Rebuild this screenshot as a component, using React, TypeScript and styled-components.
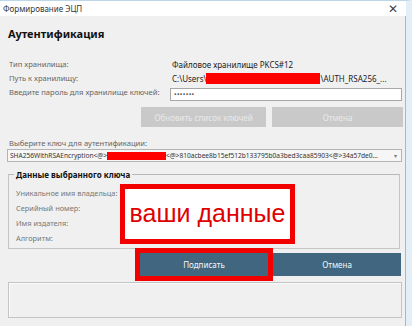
import styled, { createGlobalStyle } from "styled-components";

const GlobalStyle = createGlobalStyle`
  html, body {
    margin: 0;
    padding: 0;
    background: #eaf1f7;
  }
  * {
    box-sizing: border-box;
  }
`;

const Window = styled.div`
  width: 412px;
  height: 326px;
  display: flex;
  flex-direction: column;
  background: #f0f0f0;
  font-family: "Noto Sans", "Open Sans", sans-serif;
  font-size: 8px;
  color: #222;
  border-top: 1px solid #bcd6ea;
  border-right: 6px solid #e4eef6;
  overflow: hidden;
`;

const TitleBar = styled.div`
  height: 15px;
  flex-shrink: 0;
  display: flex;
  align-items: center;
  justify-content: space-between;
  padding: 0 8px 0 3px;
  background: #ffffff;
  color: #333;
  font-size: 8px;
`;

const Close = styled.span`
  font-size: 12px;
  color: #444;
  line-height: 1;
`;

const Body = styled.div`
  flex: 1;
  display: flex;
  flex-direction: column;
  padding: 0 2px 0 7px;
  border-right: 1px solid #a9b8c6;
`;

const Heading = styled.h1`
  margin: 0;
  height: 34px;
  display: flex;
  align-items: center;
  padding-left: 1px;
  font-size: 11px;
  font-weight: 700;
  color: #111;
`;

const Form = styled.div`
  display: grid;
  grid-template-columns: 165px 1fr;
  grid-auto-rows: 14px;
  align-items: center;
  margin-top: 7px;
  padding-right: 1px;
`;

const Label = styled.span`
  padding-left: 2px;
  color: #666;
  font-size: 7.6px;
  white-space: nowrap;
`;

const Value = styled.span`
  display: flex;
  align-items: center;
  white-space: nowrap;
  color: #222;
`;

const Redact = styled.span<{ $w: number; $h?: number }>`
  display: inline-block;
  width: ${(p) => p.$w}px;
  height: ${(p) => p.$h ?? 11}px;
  background: #ff0000;
`;

const PasswordInput = styled.div`
  height: 13px;
  margin: 4px 0 0 -2px;
  border: 1px solid #a8a8a8;
  background: #fff;
  display: flex;
  align-items: center;
  padding-left: 3px;
  font-size: 7px;
  letter-spacing: 0.3px;
  color: #555;
`;

const ButtonRow = styled.div<{ $top: number }>`
  display: flex;
  justify-content: flex-end;
  margin-top: ${(p) => p.$top}px;
`;

const Button = styled.div<{ $w: number; $dark?: boolean }>`
  width: ${(p) => p.$w}px;
  height: ${(p) => (p.$dark ? 23 : 20)}px;
  display: flex;
  align-items: center;
  justify-content: center;
  background: ${(p) => (p.$dark ? "#41667f" : "#c9c9c9")};
  color: ${(p) => (p.$dark ? "#f4f7f9" : "#e9e9e9")};
  font-size: 8px;
`;

const ButtonGap = styled.div<{ $w: number }>`
  width: ${(p) => p.$w}px;
`;

const SignButton = styled(Button)`
  outline: 5px solid #f20000;
  position: relative;
  z-index: 1;
`;

const ChooseLabel = styled.div`
  margin-top: 10px;
  height: 12px;
  padding-left: 2px;
  display: flex;
  align-items: center;
  font-size: 7.6px;
  color: #666;
`;

const Select = styled.div`
  height: 13px;
  margin-right: 1px;
  border: 1px solid #b4b4b4;
  background: #f6f6f6;
  display: flex;
  align-items: center;
  padding-left: 2px;
  font-size: 6.6px;
  color: #333;
  white-space: nowrap;
  overflow: hidden;
`;

const SelectText = styled.span`
  flex: 1;
  display: flex;
  align-items: center;
  overflow: hidden;
`;

const Arrow = styled.span`
  width: 12px;
  text-align: center;
  font-size: 6px;
  color: #777;
`;

const Group = styled.fieldset`
  position: relative;
  margin: 7px 3px 0 1px;
  padding: 5px 0 4px 7px;
  height: 80px;
  border: 1px solid #c4c4c4;
  border-top-color: #b8b8b8;
  display: flex;
  flex-direction: column;
`;

const Legend = styled.legend`
  padding: 0 2px;
  margin-left: -2px;
  font-weight: 700;
  color: #111;
  font-size: 8px;
`;

const GroupRow = styled.span`
  height: 15px;
  display: flex;
  align-items: center;
  font-size: 7.4px;
  color: #777;
`;

const Overlay = styled.div`
  position: absolute;
  left: 111px;
  top: 4px;
  width: 175px;
  height: 60px;
  border: 5px solid #f20000;
  background: #fff;
  display: flex;
  align-items: center;
  justify-content: center;
  font-family: "Liberation Sans", Arial, sans-serif;
  font-size: 25px;
  color: #e00000;
  padding-bottom: 2px;
`;

const StatusBox = styled.div`
  margin: 6px 1px 0 1px;
  height: 36px;
  border: 1px solid #c4c4c4;
  box-shadow: inset 1px 1px 0 #fafafa;
`;

export default function App() {
  return (
    <>
      <GlobalStyle />
      <Window>
        <TitleBar>
          <span>Формирование ЭЦП</span>
          <Close>✕</Close>
        </TitleBar>
        <Body>
          <Heading>Аутентификация</Heading>
          <Form>
            <Label>Тип хранилища:</Label>
            <Value>Файловое хранилище PKCS#12</Value>
            <Label>Путь к хранилищу:</Label>
            <Value>
              C:\Users\
              <Redact $w={114} />
              \AUTH_RSA256_...
            </Value>
            <Label>Введите пароль для хранилище ключей:</Label>
            <PasswordInput>•••••••</PasswordInput>
          </Form>
          <ButtonRow $top={8}>
            <Button $w={125}>Обновить список ключей</Button>
            <ButtonGap $w={6} />
            <Button $w={131}>Отмена</Button>
          </ButtonRow>
          <ChooseLabel>Выберите ключ для аутентификации:</ChooseLabel>
          <Select>
            <SelectText>
              SHA256WithRSAEncryption&lt;@&gt;
              <Redact $w={59} $h={8} />
              &lt;@&gt;810acbee8b15ef512b133795b0a3bed3caa85903&lt;@&gt;34a57de0...
            </SelectText>
            <Arrow>▾</Arrow>
          </Select>
          <Group>
            <Legend>Данные выбранного ключа</Legend>
            <GroupRow>Уникальное имя владельца:</GroupRow>
            <GroupRow>Серийный номер:</GroupRow>
            <GroupRow>Имя издателя:</GroupRow>
            <GroupRow>Алгоритм:</GroupRow>
            <Overlay>ваши данные</Overlay>
          </Group>
          <ButtonRow $top={4}>
            <SignButton $w={128} $dark>
              Подписать
            </SignButton>
            <ButtonGap $w={5} />
            <Button $w={128} $dark>
              Отмена
            </Button>
            <ButtonGap $w={2} />
          </ButtonRow>
          <StatusBox />
        </Body>
      </Window>
    </>
  );
}
